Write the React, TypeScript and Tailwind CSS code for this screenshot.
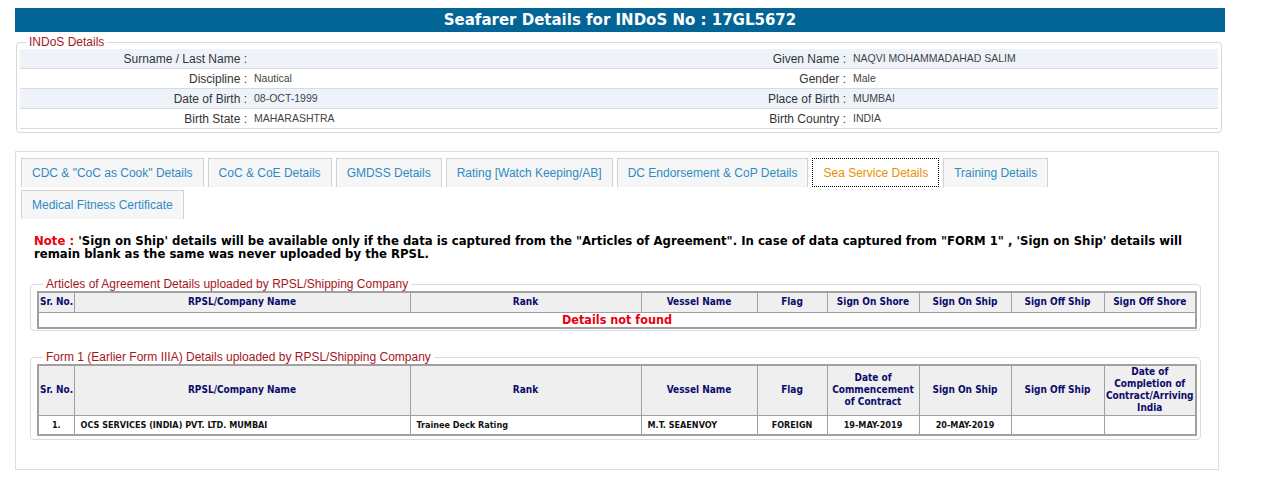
import React from 'react';

const tabs = [
  'CDC & "CoC as Cook" Details',
  'CoC & CoE Details',
  'GMDSS Details',
  'Rating [Watch Keeping/AB]',
  'DC Endorsement & CoP Details',
  'Sea Service Details',
  'Training Details',
];

const indos = [
  ['Surname / Last Name :', '', 'Given Name :', 'NAQVI MOHAMMADAHAD SALIM'],
  ['Discipline :', 'Nautical', 'Gender :', 'Male'],
  ['Date of Birth :', '08-OCT-1999', 'Place of Birth :', 'MUMBAI'],
  ['Birth State :', 'MAHARASHTRA', 'Birth Country :', 'INDIA'],
];

const Tab = ({ label, active }: { label: string; active?: boolean }) => (
  <div
    className={
      active
        ? 'h-[29px] px-[10px] flex items-center bg-white border border-dotted border-black text-[#eb8f00] text-[12px]'
        : 'h-[29px] px-[10px] flex items-center bg-[#f6f6f6] border border-b-0 border-[#d3d3d3] text-[#2e8bc4] text-[12px]'
    }
  >
    {label}
  </div>
);

const th = 'border border-[#a0a0a0] bg-[#efefef] text-[#0b0b6b] font-bold text-center px-[1px]';
const td = 'border border-[#a0a0a0] text-[#111] font-bold px-[6px]';

const Cols = () => (
  <colgroup>
    <col className="w-[36px]" />
    <col className="w-[336px]" />
    <col className="w-[231px]" />
    <col className="w-[116px]" />
    <col className="w-[70px]" />
    <col className="w-[92px]" />
    <col className="w-[92px]" />
    <col className="w-[93px]" />
    <col />
  </colgroup>
);

export default function App() {
  return (
    <div className="bg-white min-h-[484px] pt-[8px] pl-[15px] font-['Liberation_Sans',Arial,sans-serif]">
      <div className="w-[1210px]">
        {/* Title bar */}
        <div className="h-[24px] bg-[#036496] flex items-center justify-center text-white text-[15px] font-bold font-['DejaVu_Sans',Verdana,sans-serif]">
          Seafarer Details for INDoS No : 17GL5672
        </div>

        {/* INDoS details */}
        <fieldset className="mt-[3px] ml-[1px] w-[1206px] border border-[#d8d8d8] rounded-[4px] px-[3px] pb-[3px]">
          <legend className="ml-[6px] px-[3px] text-[12px] leading-[14px] text-[#a5161c]">INDoS Details</legend>
          {indos.map((r, i) => (
            <div
              key={i}
              className={
                'grid grid-cols-[227px_373px_226px_1fr] h-[20px] items-center border-b border-[#dadada] text-[12px] ' +
                (i % 2 === 0 ? 'bg-[#eef3fa]' : 'bg-white')
              }
            >
              <div className="text-right text-[#333]">{r[0]}</div>
              <div className="pl-[7px] text-[10.5px] text-[#444]">{r[1]}</div>
              <div className="text-right text-[#333]">{r[2]}</div>
              <div className="pl-[7px] text-[10.5px] text-[#444]">{r[3]}</div>
            </div>
          ))}
        </fieldset>

        {/* Tabs panel */}
        <div className="mt-[18px] w-[1204px] h-[319px] border border-[#dddddd] px-[5px] pt-[6px]">
          <div className="flex flex-wrap gap-x-[4px] gap-y-[3px]">
            {tabs.map((t) => (
              <Tab key={t} label={t} active={t === 'Sea Service Details'} />
            ))}
            <Tab label="Medical Fitness Certificate" />
          </div>

          <p className="mt-[16px] ml-[13px] w-[1170px] text-[11.7px] leading-[13px] font-bold text-black font-['DejaVu_Sans',Verdana,sans-serif]">
            <span className="text-[#e8000b]">Note :</span> 'Sign on Ship' details will be available only if the data is captured from the "Articles of Agreement". In case of data captured from "FORM 1" , 'Sign on Ship' details will remain blank as the same was never uploaded by the RPSL.
          </p>

          {/* Articles of Agreement */}
          <fieldset className="mt-[16px] ml-[9px] w-[1170px] border border-[#dcdcdc] rounded-[4px] pl-[6px] pr-[3px] pb-[1px]">
            <legend className="ml-[6px] px-[3px] text-[12px] leading-[14px] text-[#a5161c]">
              Articles of Agreement Details uploaded by RPSL/Shipping Company
            </legend>
            <table className="table-fixed w-[1160px] border-collapse border-2 border-[#a0a0a0] text-[10px] leading-[12px] font-['DejaVu_Sans',Verdana,sans-serif] font-stretch-condensed">
              <Cols />
              <thead>
                <tr className="h-[20px]">
                  <th className={th + ' whitespace-nowrap'}>Sr. No.</th>
                  <th className={th}>RPSL/Company Name</th>
                  <th className={th}>Rank</th>
                  <th className={th}>Vessel Name</th>
                  <th className={th}>Flag</th>
                  <th className={th}>Sign On Shore</th>
                  <th className={th}>Sign On Ship</th>
                  <th className={th}>Sign Off Ship</th>
                  <th className={th}>Sign Off Shore</th>
                </tr>
              </thead>
              <tbody>
                <tr className="h-[16px]">
                  <td colSpan={9} className="border border-[#a0a0a0] text-center text-[12.5px] font-bold text-[#e8000b]">
                    Details not found
                  </td>
                </tr>
              </tbody>
            </table>
          </fieldset>

          {/* Form 1 */}
          <fieldset className="mt-[19px] ml-[9px] w-[1170px] border border-[#dcdcdc] rounded-[4px] pl-[6px] pr-[3px] pb-[3px]">
            <legend className="ml-[6px] px-[3px] text-[12px] leading-[14px] text-[#a5161c]">
              Form 1 (Earlier Form IIIA) Details uploaded by RPSL/Shipping Company
            </legend>
            <table className="table-fixed w-[1160px] border-collapse border-2 border-[#a0a0a0] text-[10px] leading-[12px] font-['DejaVu_Sans',Verdana,sans-serif] font-stretch-condensed">
              <Cols />
              <thead>
                <tr className="h-[50px]">
                  <th className={th + ' whitespace-nowrap'}>Sr. No.</th>
                  <th className={th}>RPSL/Company Name</th>
                  <th className={th}>Rank</th>
                  <th className={th}>Vessel Name</th>
                  <th className={th}>Flag</th>
                  <th className={th}>Date of Commencement of Contract</th>
                  <th className={th}>Sign On Ship</th>
                  <th className={th}>Sign Off Ship</th>
                  <th className={th}>Date of Completion of Contract/Arriving India</th>
                </tr>
              </thead>
              <tbody>
                <tr className="h-[20px] text-[9px]">
                  <td className={td + ' text-center'}>1.</td>
                  <td className={td}>OCS SERVICES (INDIA) PVT. LTD. MUMBAI</td>
                  <td className={td}>Trainee Deck Rating</td>
                  <td className={td}>M.T. SEAENVOY</td>
                  <td className={td + ' text-center'}>FOREIGN</td>
                  <td className={td + ' text-center'}>19-MAY-2019</td>
                  <td className={td + ' text-center'}>20-MAY-2019</td>
                  <td className={td}></td>
                  <td className={td}></td>
                </tr>
              </tbody>
            </table>
          </fieldset>
        </div>
      </div>
    </div>
  );
}
